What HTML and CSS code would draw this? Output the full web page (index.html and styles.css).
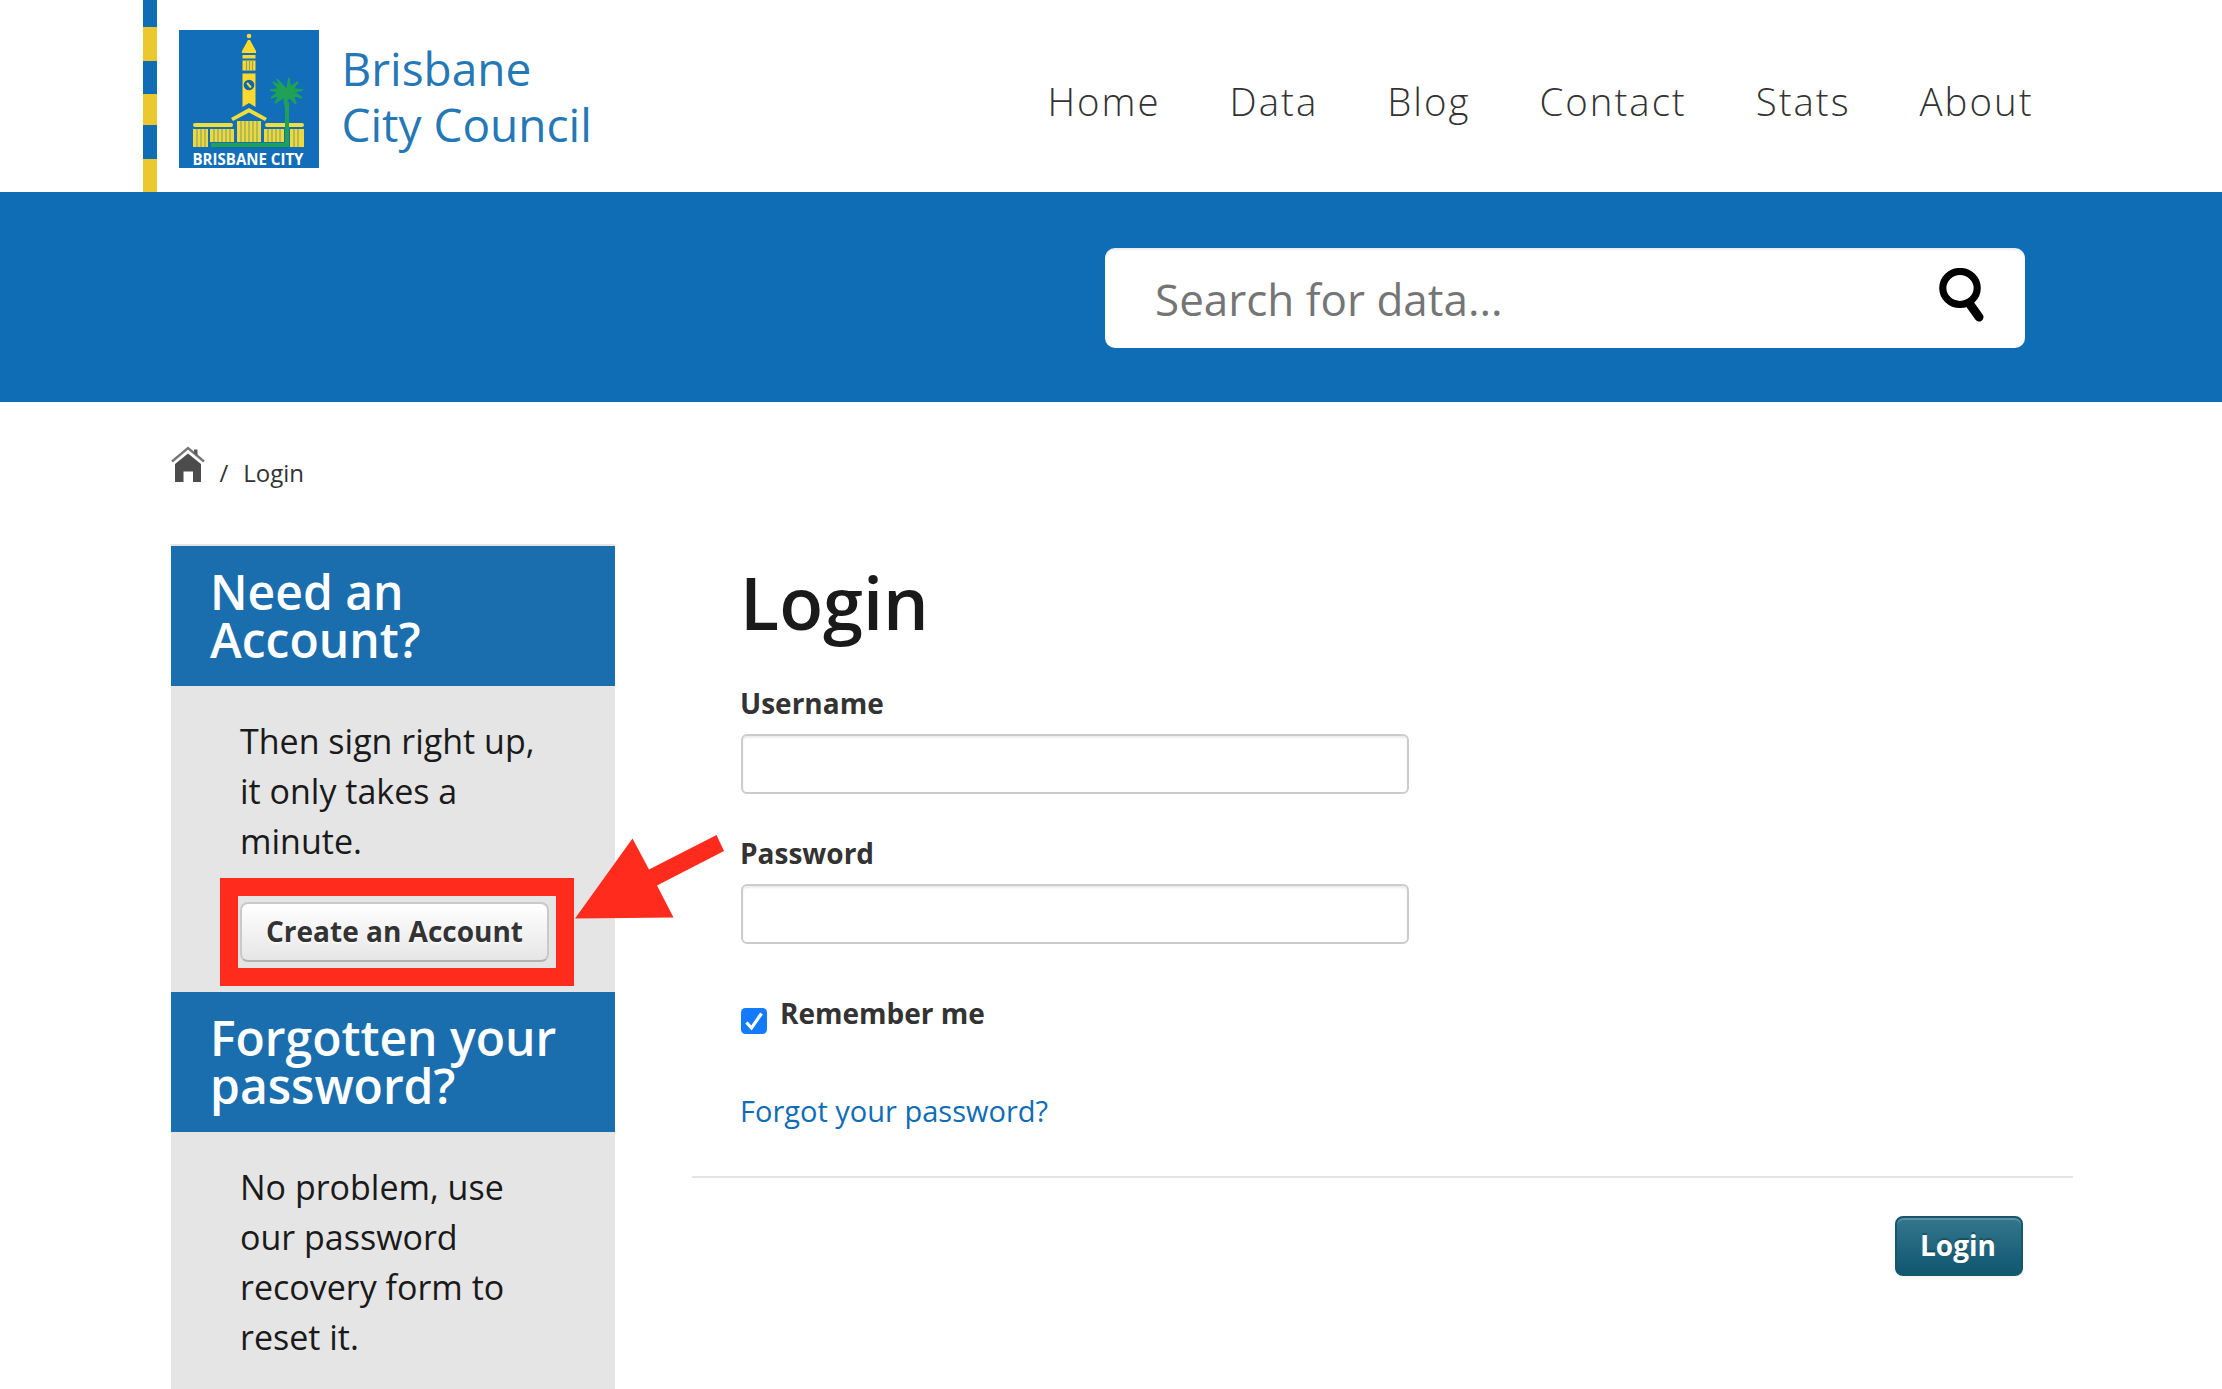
FILE: index.html
```html
<!DOCTYPE html>
<html lang="en">
<head>
<meta charset="utf-8">
<title>Login - Brisbane City Council</title>
<link rel="stylesheet" href="styles.css">
</head>
<body>
<header class="masthead">
  <div class="stripe"></div>
  <a class="brand">
    <svg class="crest" viewBox="0 0 140 138" width="140" height="138">
      <rect width="140" height="138" fill="#126eb8"/>
      <g fill="#fdd92f">
        <circle cx="70" cy="6" r="2.300"/>
        <path d="M69 10h2l6 11v2H63v-2z"/>
        <path d="M63.500 25h13v3.500h-13zM63.500 30.500h13v10h-13zM63.500 43.500h13v33.500l-6.500-4-6.500 4z"/>
      </g>
      <g fill="#f0df3a">
        <path d="M16 93h36a2 2 0 0 1 0 4H16a2 2 0 0 1 0-4zM88 93h35a2 2 0 0 1 0 4H88a2 2 0 0 1 0-4z"/>
        <path d="M70 78l18 10-2 3-16-8.500-16 8.500-2-3z"/>
        <path d="M14 99h15v18H14zM31 99h24v13H31zM58 91h24v21H58zM85 99h20v13H85zM111 99h14v18h-14z" fill="#ecd93c"/>
      </g>
      <path d="M18 99v18M22 99v18M26 99v18M35 99v13M39 99v13M43 99v13M47 99v13M51 99v13M62 91v21M66 91v21M70 91v21M74 91v21M78 91v21M89 99v13M93 99v13M97 99v13M101 99v13M115 99v18M119 99v18M67.500 31v9M70.500 31v9M73.500 31v9" stroke="#8fa568" stroke-width="1.200"/>
      <circle cx="70" cy="55" r="5.300" fill="#1466a5"/>
      <path d="M68 53l4 4.500" stroke="#f0df3a" stroke-width="2"/>
      <path d="M32 113h74V72h4v45H32z" fill="#1fa158"/>
      <path d="M108 60l2-12 1 9 8-5-5 7 10 1-9 2 8 6-9-3 3 9-7-7-4 8-1-8-9 6 5-8-9 3 7-6-8-2 9-1-6-7 8 5-4-8z" fill="#1fa158" stroke="#1fa158" stroke-width="1.600"/>
      <text x="13.500" y="134.500" textLength="111" lengthAdjust="spacingAndGlyphs" class="crest-name">BRISBANE CITY</text>
    </svg>
    <span class="brand-name">Brisbane<br>City Council</span>
  </a>
  <nav class="nav">
    <a>Home</a><a>Data</a><a>Blog</a><a>Contact</a><a>Stats</a><a>About</a>
  </nav>
</header>

<div class="search-band">
  <form class="search">
    <input class="search-input" type="text" placeholder="Search for data...">
    <svg class="search-icon" viewBox="0 0 45 54" width="45" height="54">
      <ellipse cx="21" cy="20" rx="17.200" ry="16.500" fill="none" stroke="#000" stroke-width="7.200"/>
      <path d="M30 35l10 14" stroke="#000" stroke-width="9" stroke-linecap="round"/>
    </svg>
  </form>
</div>

<div class="breadcrumb">
  <svg class="home" viewBox="0 0 34 36" width="34" height="36">
    <path d="M1 15.500L17 2l16 13.500" fill="none" stroke="#777" stroke-width="2.400"/>
    <path d="M23 3.500h3.500V10L23 7z" fill="#5a5a5a"/>
    <path d="M17 7.500L30 18v18h-8V25.500h-9.500V36H4V18z" fill="#4c4c4c"/>
  </svg>
  <span class="slash">/</span>
  <span>Login</span>
</div>

<div class="columns">
  <aside class="sidebar">
    <section class="module">
      <h2>Need an Account?</h2>
      <div class="module-body">
        <p>Then sign right up, it only takes a minute.</p>
        <div class="cta">
          <a class="btn">Create an Account</a>
          <div class="marker"></div>
          <svg class="arrow" viewBox="0 0 150 86" width="150" height="86">
            <path d="M0 83.500L57.500 3.500 74 34.500 141.500 0 149 16 82 50.500 98.500 82.500z" fill="#ff2b1d"/>
          </svg>
        </div>
      </div>
    </section>
    <section class="module">
      <h2>Forgotten your password?</h2>
      <div class="module-body">
        <p>No problem, use our password recovery form to reset it.</p>
      </div>
    </section>
  </aside>

  <main class="main">
    <form class="login">
      <h1>Login</h1>
      <label for="user">Username</label>
      <input class="field" id="user" type="text">
      <label for="pass">Password</label>
      <input class="field" id="pass" type="password">
      <div class="remember">
        <svg viewBox="0 0 26 26" width="26" height="26">
          <rect width="26" height="26" rx="4.500" fill="#147aff"/>
          <path d="M5.500 14.500l5 5.500L20.500 5.500" fill="none" stroke="#fff" stroke-width="3.200"/>
        </svg>
        <span>Remember me</span>
      </div>
      <a class="forgot">Forgot your password?</a>
    </form>
    <div class="actions"><button class="btn-primary" type="button">Login</button></div>
  </main>
</div>
</body>
</html>
```
FILE: styles.css
```css
* { box-sizing: border-box; }
html, body { height: 1389px; overflow: hidden; }
body {
  margin: 0;
  background: #fff;
  color: #333;
  font-family: "Open Sans", "Noto Sans", sans-serif;
}
.masthead { display: flex; height: 192px; padding-left: 143px; }
.stripe {
  width: 14px;
  background: linear-gradient(#0f6db6 27px, #ebc82e 27px 61px, #0f6db6 61px 94px, #ebc82e 94px 125px, #0f6db6 125px 159px, #ebc82e 159px);
}
.brand { display: flex; padding: 30px 0 0 22px; }
.crest { display: block; }
.crest-name { font: 700 16px "Open Sans", sans-serif; fill: #fff; }
.brand-name {
  margin: 10px 0 0 22.5px;
  color: #2578b6;
  font-size: 46px;
  line-height: 56px;
  letter-spacing: 0;
  white-space: nowrap;
}
.nav {
  display: flex;
  gap: 69px;
  margin-left: auto;
  padding: 75px 188.5px 0 0;
  font-size: 38.4px;
  font-weight: 300;
  line-height: 52px;
  letter-spacing: 2px;
}
.search-band { height: 210px; padding: 56px 197px 0 0; background: #0f6db6; }
.search {
  display: flex;
  align-items: flex-start;
  width: 920px;
  height: 100px;
  margin-left: auto;
  padding: 20px 41px 0 50px;
  border-radius: 10px;
  background: #fff;
  box-shadow: inset 0 2px 2px rgba(0, 0, 0, .075);
}
.search-input {
  flex: 1;
  height: 62px;
  padding: 0;
  border: 0;
  outline: 0;
  background: none;
  font: 44px "Open Sans", sans-serif;
}
.search-input::placeholder { color: #757575; }
.breadcrumb {
  display: flex;
  height: 142px;
  padding: 44px 0 0 171px;
  font-size: 24px;
  line-height: 54px;
}
.slash { margin: 0 15px 0 14.5px; }
.columns { display: flex; padding-left: 171px; }
.sidebar {
  width: 444px;
  height: 845px;
  padding-top: 2px;
  background: #e5e5e5;
}
.module h2 {
  margin: 0;
  padding: 22px 30px 22px 39px;
  background: #1a6eae;
  color: #fff;
  font-size: 48px;
  font-weight: 600;
  line-height: 48px;
}
.module-body { padding: 30px 66px 30px 69px; color: #1a1a1a; font-size: 34px; line-height: 50px; }
.module-body p { width: 300px; margin: 0; }
.cta { position: relative; width: 309px; margin-top: 36px; }
.btn {
  display: block;
  height: 60px;
  border: 2px solid #c9c9c9;
  border-bottom-color: #b3b3b3;
  border-radius: 8px;
  background: linear-gradient(#fff, #e6e6e6);
  color: #333;
  font-size: 28px;
  font-weight: 700;
  line-height: 54px;
  text-align: center;
  text-shadow: 0 2px 2px rgba(255, 255, 255, .75);
  white-space: nowrap;
}
.marker {
  position: absolute;
  left: -20px;
  top: -24px;
  width: 354px;
  height: 108px;
  border: solid #ff2b1d;
  border-width: 18px;
}
.arrow { position: absolute; left: 335px; top: -67px; }
.main { width: 1381px; margin-left: 77px; }
.login { padding: 18px 0 44px 49px; border-bottom: 2px solid #e3e3e3; }
h1 { margin: 0 0 41px -1px; color: #1a1a1a; font-size: 72px; font-weight: 600; line-height: 80px; }
label { display: block; margin-left: -1px; font-size: 28px; font-weight: 700; line-height: 40px; }
.field {
  display: block;
  width: 668px;
  height: 60px;
  margin: 11px 0 39px;
  border: 2px solid #ccc;
  border-radius: 6px;
  box-shadow: inset 0 2px 2px rgba(0, 0, 0, .075);
}
.remember {
  display: flex;
  gap: 13px;
  height: 40px;
  margin-top: 49px;
  font-size: 28px;
  font-weight: 700;
  line-height: 40px;
}
.remember svg { margin-top: 15px; }
.forgot { display: block; margin: 57px 0 0 -1px; color: #0f6db6; font-size: 29px; line-height: 42px; }
.actions { display: flex; justify-content: flex-end; padding: 38px 50px 0 0; }
.btn-primary {
  width: 128px;
  height: 60px;
  padding: 0 2px 2px 0;
  border: 2px solid #18566c;
  border-radius: 8px;
  background: linear-gradient(#33778d, #10566f);
  box-shadow: inset 0 2px 0 rgba(255, 255, 255, .2), 0 2px 4px rgba(0, 0, 0, .05);
  color: #fff;
  font: 700 28px/54px "Open Sans", sans-serif;
  text-shadow: 0 -2px 0 rgba(0, 0, 0, .25);
}
```
